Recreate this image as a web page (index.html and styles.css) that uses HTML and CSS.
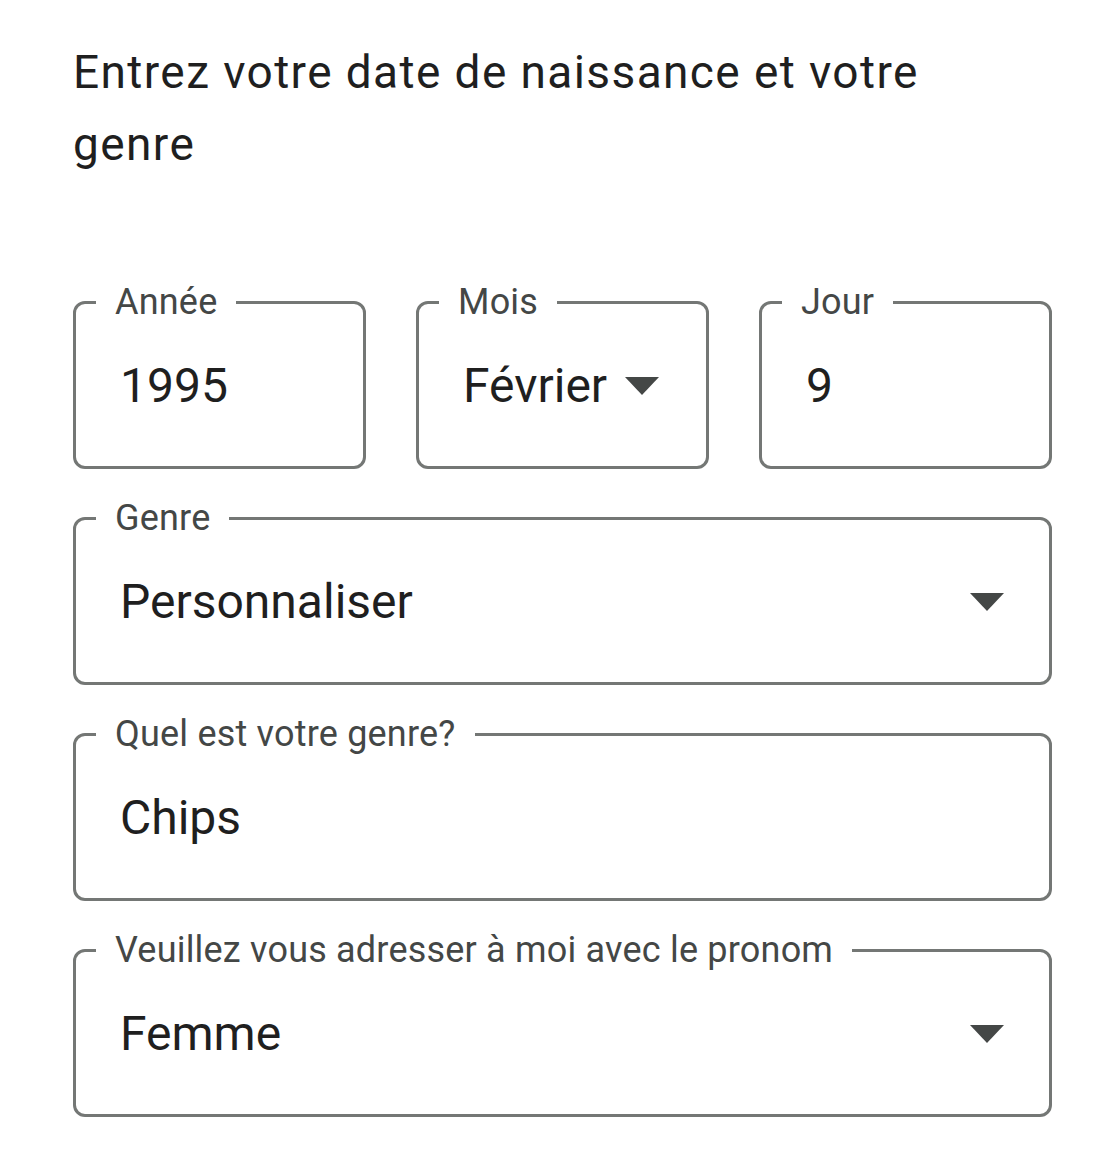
FILE: index.html
```html
<!DOCTYPE html>
<html lang="fr">
<head>
<meta charset="utf-8">
<link rel="stylesheet" href="styles.css">
</head>
<body>
<main class="page">
  <h1 class="title">Entrez votre date de naissance et votre genre</h1>
  <div class="form">
    <div class="row-3">
      <fieldset class="field">
        <legend class="label">Année</legend>
        <div class="value">1995</div>
      </fieldset>
      <fieldset class="field">
        <legend class="label">Mois</legend>
        <div class="value inline-select">Février <span class="arrow"></span></div>
      </fieldset>
      <fieldset class="field">
        <legend class="label">Jour</legend>
        <div class="value">9</div>
      </fieldset>
    </div>
    <fieldset class="field">
      <legend class="label">Genre</legend>
      <div class="value select">Personnaliser <span class="arrow"></span></div>
    </fieldset>
    <fieldset class="field">
      <legend class="label">Quel est votre genre?</legend>
      <div class="value">Chips</div>
    </fieldset>
    <fieldset class="field">
      <legend class="label">Veuillez vous adresser à moi avec le pronom</legend>
      <div class="value select">Femme <span class="arrow"></span></div>
    </fieldset>
  </div>
</main>
</body>
</html>
```
FILE: styles.css
```css
html, body {
  margin: 0;
  padding: 0;
  background: #ffffff;
}
body {
  font-family: Roboto, "Noto Sans", Arial, sans-serif;
  color: #1f1f1f;
}
.page {
  width: 979px;
  padding: 36px 0 0 73px;
}
.title {
  margin: 0;
  font-size: 46px;
  font-weight: 400;
  line-height: 72px;
  letter-spacing: 1.4px;
  color: #1f1f1f;
  width: 940px;
}
.form {
  margin-top: 102px;
  display: flex;
  flex-direction: column;
  gap: 29px;
}
.row-3 {
  display: grid;
  grid-template-columns: repeat(3, 1fr);
  gap: 50px;
}
.field {
  display: block;
  margin: 0;
  min-width: 0;
  border: 3px solid #747775;
  border-radius: 12px;
  padding: 0 45px 0 44px;
  height: 187px;
  box-sizing: border-box;
}
.label {
  margin-left: -24px;
  padding: 0 19px;
  font-size: 36px;
  line-height: 40px;
  letter-spacing: 0.2px;
  color: #444746;
  white-space: nowrap;
}
.value {
  font-size: 48px;
  line-height: 56px;
  color: #1f1f1f;
  margin-top: 36px;
}
.select {
  display: flex;
  align-items: center;
  justify-content: space-between;
}
.inline-select {
  display: flex;
  align-items: center;
  gap: 18px;
}
.arrow {
  display: inline-block;
  width: 0;
  height: 0;
  border-left: 17.5px solid transparent;
  border-right: 17.5px solid transparent;
  border-top: 18px solid #444746;
}
```
